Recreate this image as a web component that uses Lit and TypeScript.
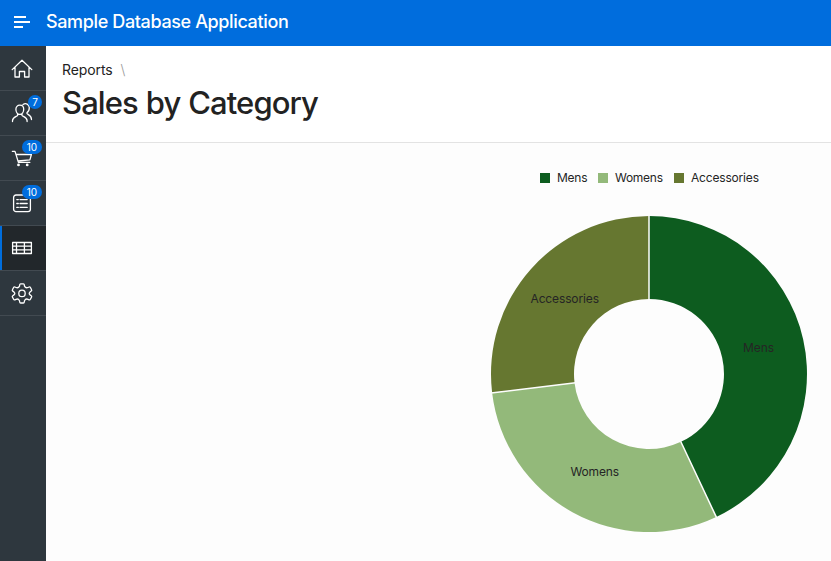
import { LitElement, html, css, svg } from "lit";
import { customElement } from "lit/decorators.js";
import { classMap } from "lit/directives/class-map.js";

const icons = {
  home: svg`<path d="M2.2 13.6 L12 4.3 L21.8 13.6 M5 11.2 V21 H9.4 V15.5 H14.6 V21 H19 V11.2" />`,
  users: svg`<path d="M9.8 4.2 C7.4 4.2 5.9 6 5.9 8.3 C5.9 11 7.4 13.4 9.8 13.4 C12.2 13.4 13.7 11 13.7 8.3 C13.7 6 12.2 4.2 9.8 4.2 Z M7.6 12.8 V14.3 C7.4 15.5 2.5 15.6 2.5 19.8 V20.6 M12 12.8 V14.3 C12.2 15.5 17.1 15.6 17.1 19.8 V20.6 M13 3.6 C15.6 1.6 19.3 3.1 19.3 6.8 C19.3 8.9 18.4 10.8 17 11.6 V12.6 C17.4 13.6 21.5 14 21.5 18.6" />`,
  cart: svg`<path d="M2.4 5.4 H5 L8.4 16.4 H19.8 M6 8.5 H21.4 L19.9 13.9 L8 15" /><circle class="dot" cx="8.5" cy="18.9" r="1.4" /><circle class="dot" cx="17.2" cy="18.9" r="1.4" />`,
  list: svg`<rect x="3.6" y="4" width="16.8" height="16.6" rx="2.4" /><path d="M6.8 8.6 h1.5 M10 8.6 h7.2 M6.8 12.5 h1.5 M10 12.5 h7.2 M6.8 16.4 h1.5 M10 16.4 h7.2" />`,
  table: svg`<path d="M2.6 6.5 H21.4 V17.5 H2.6 Z M2.6 10.2 H21.4 M2.6 13.8 H21.4 M6.5 6.5 V17.5 M14.4 6.5 V17.5" />`,
  gear: svg`<circle cx="12" cy="12.4" r="3.2" /><path d="M10.6 2.8 H13.4 Q14.2 2.8 14.3 3.8 L14.5 5.1 Q15.7 7.5 18 6.5 L19.1 6 Q20 5.7 20.4 6.5 L21.6 8.8 Q22 9.5 21.2 10.1 L20.1 10.9 Q18.3 12.4 20.1 13.9 L21.2 14.7 Q22 15.3 21.6 16 L20.4 18.3 Q20 19.1 19.1 18.8 L18 18.3 Q15.7 17.3 14.5 19.7 L14.3 21 Q14.2 22 13.4 22 H10.6 Q9.8 22 9.7 21 L9.5 19.7 Q8.3 17.3 6 18.3 L4.9 18.8 Q4 19.1 3.6 18.3 L2.4 16 Q2 15.3 2.8 14.7 L3.9 13.9 Q5.7 12.4 3.9 10.9 L2.8 10.1 Q2 9.5 2.4 8.8 L3.6 6.5 Q4 5.7 4.9 6 L6 6.5 Q8.3 7.5 9.5 5.1 L9.7 3.8 Q9.8 2.8 10.6 2.8 Z" />`,
};

const navItems = [
  { name: "Home", icon: icons.home, badge: "" },
  { name: "Customers", icon: icons.users, badge: "7" },
  { name: "Products", icon: icons.cart, badge: "10" },
  { name: "Orders", icon: icons.list, badge: "10" },
  { name: "Reports", icon: icons.table, badge: "", active: true },
  { name: "Administration", icon: icons.gear, badge: "" },
];

const series = [
  { label: "Mens", share: 0.43, color: "#0d5c1f", x: 252, y: 136, width: 31 },
  { label: "Womens", share: 0.301, color: "#93b97a", x: 79.5, y: 260, width: 48.5 },
  { label: "Accessories", share: 0.269, color: "#667730", x: 39.5, y: 87, width: 68.5 },
];

const point = (share: number, radius: number) => {
  const angle = share * 2 * Math.PI;
  return `${(158 + radius * Math.sin(angle)).toFixed(2)} ${(158 - radius * Math.cos(angle)).toFixed(2)}`;
};

const ring = (from: number, to: number) =>
  `M${point(from, 158)} A158 158 0 0 1 ${point(to, 158)} L${point(to, 75)} A75 75 0 0 0 ${point(from, 75)} Z`;

@customElement("nav-rail")
export class NavRail extends LitElement {
  static styles = css`
    :host { display: block; width: 46px; background: #2e373e; }
    .item {
      box-sizing: border-box; height: 45px; position: relative;
      display: flex; align-items: center; padding-left: 10px;
      border-bottom: 1px solid #424a51;
    }
    .active { background: #22272b; box-shadow: inset 2px 0 #006ddd; }
    .icon {
      width: 24px; height: 24px; fill: none; stroke: #fff; stroke-width: 1.3;
      stroke-linejoin: round; stroke-linecap: round;
    }
    .dot { fill: #fff; stroke: none; }
    .badge {
      position: absolute; top: 4px; right: 4px; height: 14px; min-width: 14px;
      box-sizing: border-box; padding: 0 4px; border-radius: 7px; background: #006ddd;
      color: #fff; font-size: 10px; line-height: 14px; text-align: center;
    }
    .wide { min-width: 20px; }
  `;
  render() {
    return html`${navItems.map(
      (item) => html`<div class=${classMap({ item: true, active: !!item.active })} aria-label=${item.name}>
        <svg class="icon" viewBox="0 0 24 24">${item.icon}</svg>
        ${item.badge
          ? html`<span class=${classMap({ badge: true, wide: item.badge.length > 1 })}>${item.badge}</span>`
          : null}
      </div>`
    )}`;
  }
}

@customElement("donut-chart")
export class DonutChart extends LitElement {
  static styles = css`
    :host { display: flex; flex-direction: column; align-items: center; width: 316px; }
    .legend { display: flex; gap: 10px; height: 16px; align-items: center; width: 218px; }
    .entry { flex: none; display: flex; align-items: center; gap: 7px; }
    .swatch { width: 10px; height: 10px; }
    .key { display: block; height: 16px; overflow: visible; }
    .chart { display: block; width: 316px; height: 316px; margin-top: 30px; overflow: visible; }
    .slice-label, .key-label { font: 12px Inter, "Liberation Sans", sans-serif; fill: #252525; }
    .gap { stroke: #fdfdfd; stroke-width: 1.5; }
  `;
  render() {
    let start = 0;
    const slices = series.map((s) => {
      const from = start;
      start += s.share;
      return { ...s, from, to: start };
    });
    return html`
      <div class="legend">
        ${series.map(
          (s) => html`<div class="entry">
            <svg class="swatch"><rect width="10" height="10" fill=${s.color} /></svg>
            <svg class="key" width=${Math.ceil(s.width)} height="16">
              <text class="key-label" x="0" y="12" textLength=${s.width - 0.5}>${s.label}</text>
            </svg>
          </div>`
        )}
      </div>
      <svg class="chart" viewBox="0 0 316 316">
        ${slices.map((s) => svg`<path d=${ring(s.from, s.to)} fill=${s.color} />`)}
        ${slices.map((s) => svg`<path class="gap" d="M${point(s.from, 74)} L${point(s.from, 159)}" />`)}
        ${slices.map(
          (s) => svg`<text class="slice-label" x=${s.x} y=${s.y} textLength=${s.width}>${s.label}</text>`
        )}
      </svg>
    `;
  }
}

@customElement("app-root")
export class AppRoot extends LitElement {
  static styles = css`
    :host {
      display: flex; flex-direction: column; height: 100vh; overflow: hidden;
      background: #fdfdfd; color: #222; font-family: Inter, "Liberation Sans", sans-serif;
    }
    .header {
      flex: none; height: 46px; box-sizing: border-box; display: flex; align-items: center;
      padding: 0 0 2px 14px; gap: 16px; background: #006ddd; color: #fff;
    }
    .menu { width: 16px; height: 12px; fill: none; stroke: #fff; stroke-width: 2; }
    .brand { font-size: 18px; line-height: 24px; font-weight: 500; letter-spacing: -0.37px; }
    .body { flex: 1; display: flex; min-height: 0; }
    .main { flex: 1; display: flex; flex-direction: column; }
    .title-bar {
      height: 97px; box-sizing: border-box; background: #fff; padding: 14px 16px 0;
      border-bottom: 1px solid #e3e3e3;
    }
    .crumbs { display: flex; gap: 8px; font-size: 14px; line-height: 20px; letter-spacing: -0.1px; }
    .slash { color: #999; font-weight: 300; }
    .title { margin: 3px 0 0; font-size: 31px; line-height: 40px; font-weight: 500; letter-spacing: -0.9px; word-spacing: 0.5px; }
    .content { display: flex; justify-content: flex-end; padding: 28px 24px 0 0; padding-top: 27px; }
  `;
  render() {
    return html`
      <div class="header">
        <svg class="menu" viewBox="0 0 16 12"><path d="M0 1 H12 M0 6 H16 M0 11 H9" /></svg>
        <div class="brand">Sample Database Application</div>
      </div>
      <div class="body">
        <nav-rail></nav-rail>
        <div class="main">
          <div class="title-bar">
            <div class="crumbs"><span>Reports</span><span class="slash">\\</span></div>
            <h1 class="title">Sales by Category</h1>
          </div>
          <div class="content"><donut-chart></donut-chart></div>
        </div>
      </div>
    `;
  }
}
